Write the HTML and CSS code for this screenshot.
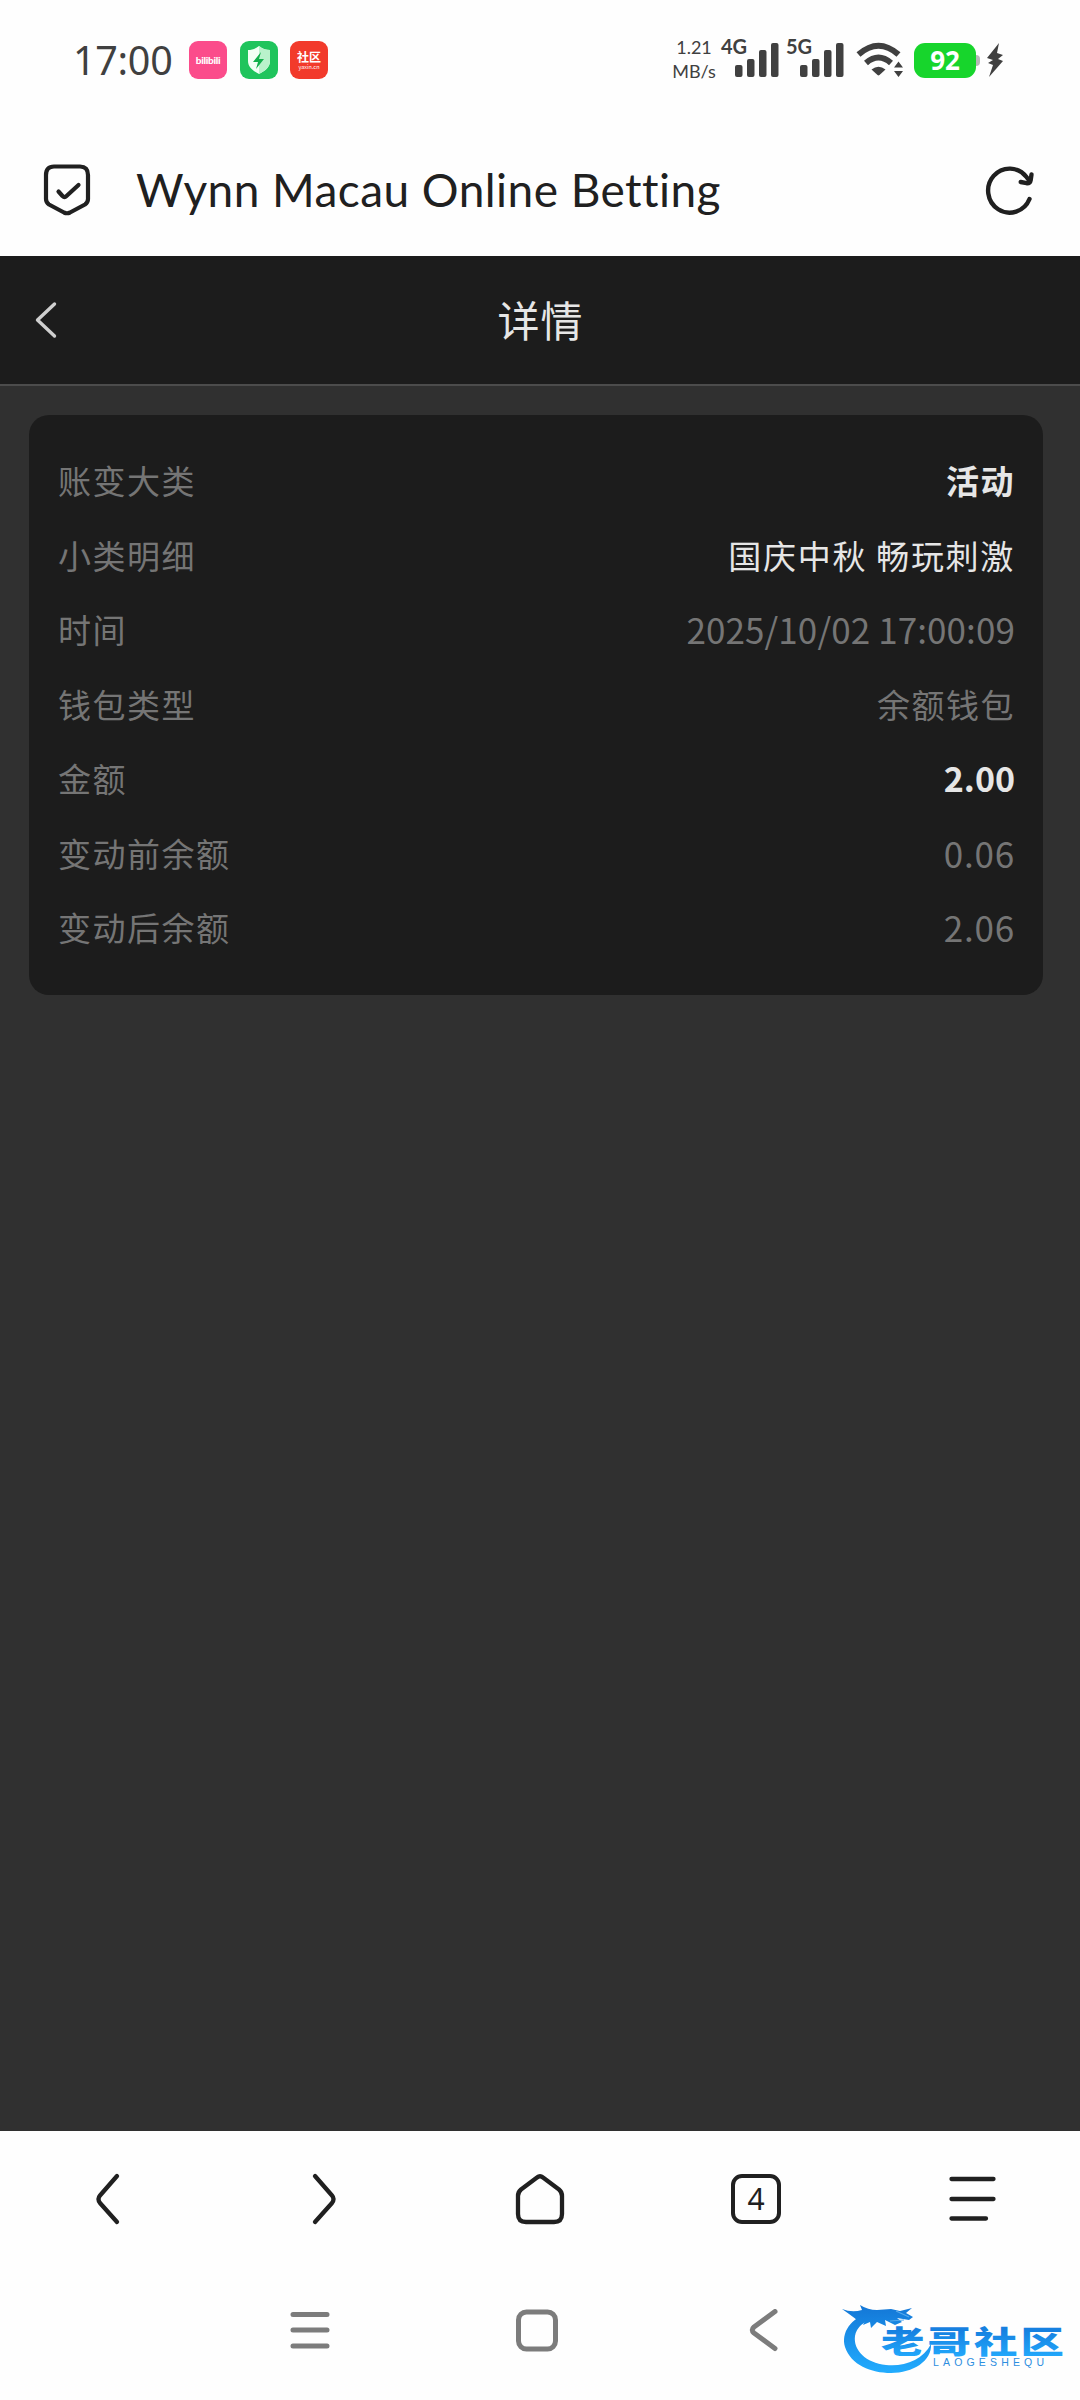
FILE: index.html
```html
<!DOCTYPE html>
<html lang="zh-CN">
<head>
    <meta charset="UTF-8">
    <meta name="viewport" content="width=device-width, initial-scale=1.0">
    <title>详情</title>
    <link rel="stylesheet" href="styles.css">
</head>
<body>
<div class="status-bar">
    <span class="clock">17:00</span>
    <div class="app-icons">
        <div class="app-icon bili">bilibili</div>
        <div class="app-icon guard">
            <svg width="38" height="38" viewBox="0 0 38 38">
                <path d="M19 5c4 3 7 4 11 4v11c0 6-5 10-11 13C13 30 8 26 8 20V9c4 0 7-1 11-4z" fill="#f2fff5"/>
                <path d="M19 5c4 3 7 4 11 4v11c0 6-5 10-11 13z" fill="#b9f2cb"/>
                <path d="M21 11l-8 10h5l-2 7 8-10h-5z" fill="#12b04c"/>
            </svg>
        </div>
        <div class="app-icon shequ">
            <b>社区</b>
            <small>yaxin.cn</small>
        </div>
    </div>
    <div class="status-right">
        <div class="speed"><span>1.21</span><span>MB/s</span></div>
        <div class="signal">
            <span class="net">4G</span>
            <svg width="44" height="34" viewBox="0 0 44 34" fill="#404040">
                <rect y="22" width="7.5" height="12" rx="2"/>
                <rect x="12" y="16" width="7.5" height="18" rx="2"/>
                <rect x="24" y="7" width="7.5" height="27" rx="2"/>
                <rect x="36" y="0" width="7.5" height="34" rx="2"/>
            </svg>
        </div>
        <div class="signal">
            <span class="net">5G</span>
            <svg width="44" height="34" viewBox="0 0 44 34" fill="#404040">
                <rect y="22" width="7.5" height="12" rx="2"/>
                <rect x="12" y="16" width="7.5" height="18" rx="2"/>
                <rect x="24" y="7" width="7.5" height="27" rx="2"/>
                <rect x="36" y="0" width="7.5" height="34" rx="2"/>
            </svg>
        </div>
        <svg class="wifi" width="48" height="36" viewBox="0 0 48 36">
            <path d="M2.5 12.5Q22.500 -5 42.500 12.500M10 21Q22.500 10 35 21" fill="none" stroke="#404040" stroke-width="6"/>
            <path d="M15.500 27.500Q22.500 22 29.500 27.500L23.500 33q-1 .8-2 0z" fill="#404040"/>
            <path d="M42.500 19.500l4.500 6h-9zM42.500 35l4.500-6h-9z" fill="#404040"/>
        </svg>
        <div class="battery">92</div>
        <svg class="bolt" width="18" height="34" viewBox="0 0 18 34">
            <path d="M13 0L1 15l6 2-5 3 5 2-4 12 14-16-5-2 5-4-6-2z" fill="#404040"/>
        </svg>
    </div>
</div>

<div class="address-bar">
    <svg width="48" height="52" viewBox="0 0 48 52" fill="none" stroke="#202020" stroke-width="4.200" stroke-linecap="round" stroke-linejoin="round">
        <path d="M11 2.500H37Q45 2.500 45 11V35Q45 38.500 42 40.500L27 48.500Q24 50 21 48.500L6 40.500Q3 38.500 3 35V11Q3 2.500 11 2.500z"/>
        <path d="M15.500 27.500l4 4.500q2 2 4 0L35.500 21"/>
    </svg>
    <h1>Wynn Macau Online Betting</h1>
    <svg width="50" height="50" viewBox="0 0 50 50" fill="none" stroke="#202020" stroke-width="4.400" stroke-linecap="round" stroke-linejoin="round">
        <path d="M44.500 34A21.500 22 0 1 1 41.500 12L44.500 16"/>
        <path d="M46.500 9.500l-.8 5.500q-.6 3.400-4 3.200l-6-1.200"/>
    </svg>
</div>

<div class="page">
    <div class="page-header">
        <svg width="24" height="38" viewBox="0 0 24 38">
            <path d="M21.500 3L4.500 19 21.500 35" fill="none" stroke="#cfcfcf" stroke-width="3.400" stroke-linecap="round" stroke-linejoin="round"/>
        </svg>
        <h2>详情</h2>
    </div>
    <div class="card">
        <div class="row"><span class="label">账变大类</span><span class="value strong">活动</span></div>
        <div class="row"><span class="label">小类明细</span><span class="value light">国庆中秋 畅玩刺激</span></div>
        <div class="row"><span class="label">时间</span><span class="value date">2025/10/02 17:00:09</span></div>
        <div class="row"><span class="label">钱包类型</span><span class="value">余额钱包</span></div>
        <div class="row"><span class="label">金额</span><span class="value num strong">2.00</span></div>
        <div class="row"><span class="label">变动前余额</span><span class="value num">0.06</span></div>
        <div class="row"><span class="label">变动后余额</span><span class="value num">2.06</span></div>
    </div>
</div>

<div class="toolbar">
    <svg width="54" height="54" viewBox="0 0 54 54">
        <path d="M36 4L19 23.500Q16 27 19 31L36 50"/>
    </svg>
    <svg width="54" height="54" viewBox="0 0 54 54">
        <path d="M18 4L35 23.500Q38 27 35 31L18 50"/>
    </svg>
    <svg width="54" height="54" viewBox="0 0 54 54">
        <path d="M24 5.500Q27 3 30 5.500L46 17.500Q49 20 49 24V42Q49 50 41 50H13Q5 50 5 42V24Q5 20 8 17.500z"/>
    </svg>
    <div class="tabs">4</div>
    <svg width="54" height="54" viewBox="0 0 54 54">
        <path d="M6.500 7H48.500M6.500 27H48.500M6.500 46.500H41"/>
    </svg>
</div>

<div class="nav-bar">
    <svg width="44" height="44" viewBox="0 0 44 44">
        <path d="M5 5.500H39M5 21H39M5 37H39"/>
    </svg>
    <svg width="44" height="44" viewBox="0 0 44 44">
        <rect x="3.500" y="3" width="37" height="37" rx="8"/>
    </svg>
    <svg width="44" height="44" viewBox="0 0 44 44">
        <path d="M33 2.500L12 18Q8.500 21 12 24L33 39.500"/>
    </svg>
</div>

<svg class="watermark" width="230" height="90" viewBox="0 0 230 90">
    <defs>
        <linearGradient id="blue" gradientUnits="userSpaceOnUse" x1="0" y1="8" x2="0" y2="74">
            <stop offset="0" stop-color="#1479d8"/>
            <stop offset="1" stop-color="#22adff"/>
        </linearGradient>
        <linearGradient id="blueText" x1="0" y1="0" x2="0" y2="1">
            <stop offset="0.300" stop-color="#1680e0"/>
            <stop offset="0.900" stop-color="#22a9fc"/>
        </linearGradient>
    </defs>
    <!-- dragon body -->
    <path d="M30 12C9 18 0 33 4 47C10 65 30 73 50 73C72 73 91 61 90 44C82 60 63 67 45 65C25 63 12 50 14 36Q16 23 36 17z" fill="url(#blue)"/>
    <!-- head, horns and whiskers -->
    <path d="M1 9q10 4 20 1l-2-5q8 5 17 5l14-1 9 2 12-3-6 5 7 4-4 3-12-2 5 4-7 3-10-5 1 6-9-4-6 6-1-6-7 3 3-6-9 1Q11 16 1 9z" fill="url(#blue)"/>
    <path d="M49 21l14-1M55 11l13 6" fill="none" stroke="#55a9ec" stroke-width="1.200"/>
    <g transform="translate(40 53) scale(1.400 1)">
        <text class="wm-name" x="0" y="0" fill="url(#blueText)">老哥社区</text>
    </g>
    <text class="wm-sub" x="92" y="66" textLength="111">LAOGESHEQU</text>
</svg>
</body>
</html>
```
FILE: styles.css
```css
* {
    box-sizing: border-box;
}

body {
    margin: 0;
    height: 2400px;
    display: flex;
    flex-direction: column;
    position: relative;
    background: #fefefe;
    font-family: "Noto Sans CJK SC", sans-serif;
    overflow: hidden;
}

svg {
    display: block;
    flex-shrink: 0;
}

/* status bar */
.status-bar {
    height: 120px;
    padding: 0 76px 0 73px;
    display: flex;
    align-items: center;
    color: #404040;
}

.clock {
    width: 116px;
    font-family: "Noto Sans", sans-serif;
    font-size: 39.500px;
    line-height: 50px;
    letter-spacing: -0.300px;
}

.app-icons {
    display: flex;
    gap: 12.500px;
}

.app-icon {
    width: 38px;
    height: 38px;
    border-radius: 9px;
    color: white;
    display: flex;
    flex-direction: column;
    align-items: center;
    justify-content: center;
    overflow: hidden;
}

.bili {
    background: #fb4c8b;
    font: 900 10px/12px Lato, sans-serif;
    letter-spacing: -0.300px;
}

.guard {
    background: #1fc45c;
}

.shequ {
    background: #f23a2b;
}

.shequ b {
    font-size: 12px;
    line-height: 14px;
}

.shequ small {
    font-size: 5.500px;
    line-height: 6px;
}

.status-right {
    margin-left: auto;
    display: flex;
    align-items: center;
}

.speed {
    width: 42px;
    margin: -2px 6px 0 0;
    display: flex;
    flex-direction: column;
    align-items: center;
    font: 18px/24px Lato, sans-serif;
}

.signal {
    width: 65px;
    height: 40px;
    position: relative;
    padding: 3px 0 0 14px;
}

.net {
    position: absolute;
    left: 0;
    top: -4px;
    font: bold 20px/20px Lato, sans-serif;
}

.wifi {
    margin-left: 5px;
}

.battery {
    width: 62px;
    height: 35px;
    margin-left: 10px;
    border-radius: 11px;
    background: #17d52c;
    color: white;
    font: bold 26px/35px "Noto Sans", sans-serif;
    text-align: center;
    position: relative;
}

.battery::after {
    content: "";
    position: absolute;
    left: 62px;
    top: 12px;
    width: 4px;
    height: 11px;
    border-radius: 0 4px 4px 0;
    background: #b8b8b8;
}

.bolt {
    margin-left: 10px;
}

/* browser address bar */
.address-bar {
    height: 136px;
    padding: 3px 45px 0 43px;
    display: flex;
    align-items: center;
}

.address-bar h1 {
    margin: 0 auto 0 45px;
    color: #202020;
    font: 400 46px/60px Lato, sans-serif;
    letter-spacing: 0.450px;
    font-variant-ligatures: none;
    white-space: nowrap;
}

/* page content */
.page {
    height: 1875px;
    background: #303030;
}

.page-header {
    height: 130px;
    padding-left: 33px;
    display: flex;
    align-items: center;
    background: #1c1c1c;
    border-bottom: 2px solid #4c4c4c;
}

.page-header h2 {
    flex: 1;
    margin: -3px 56px 0 0;
    text-align: center;
    color: #e6e6e6;
    font-size: 42px;
    font-weight: 400;
    line-height: 60px;
    letter-spacing: 1px;
}

.card {
    margin: 29px 37px 0 29px;
    padding: 28px 29px 30px;
    border-radius: 20px;
    background: #1c1c1c;
}

.row {
    height: 74.500px;
    display: flex;
    justify-content: space-between;
    align-items: center;
    font-size: 33px;
    line-height: 48px;
    letter-spacing: 1.500px;
    color: #757575;
}

.value {
    margin-right: -1px;
}

.light {
    color: #e6e6e6;
    letter-spacing: 1.700px;
}

.strong {
    color: #e6e6e6;
    font-weight: 700;
}

.date,
.num {
    font-size: 35px;
    letter-spacing: 0.800px;
}

.date {
    letter-spacing: 0.100px;
}

.num.strong {
    font-size: 34px;
    letter-spacing: 0;
}

/* browser toolbar */
.toolbar {
    height: 135px;
    display: grid;
    grid-template-columns: repeat(5, 1fr);
    align-items: center;
    justify-items: center;
}

.toolbar svg {
    fill: none;
    stroke: #202020;
    stroke-width: 4.300;
    stroke-linecap: round;
    stroke-linejoin: round;
}

.tabs {
    width: 50px;
    height: 50px;
    border: 4px solid #202020;
    border-radius: 11px;
    color: #202020;
    font: 30px/41px "Noto Sans", sans-serif;
    text-align: center;
}

/* system navigation */
.nav-bar {
    padding: 43px 0 0 288px;
    display: flex;
    gap: 183px;
}

.nav-bar svg {
    fill: none;
    stroke: #7c7c7c;
    stroke-width: 5;
    stroke-linecap: round;
    stroke-linejoin: round;
}

.watermark {
    position: absolute;
    left: 841px;
    top: 2300px;
}

.wm-name {
    font-size: 31px;
    font-weight: 900;
    letter-spacing: 2.200px;
}

.wm-sub {
    font: 10.500px "Liberation Sans", sans-serif;
    fill: #2d8ee0;
}
```
